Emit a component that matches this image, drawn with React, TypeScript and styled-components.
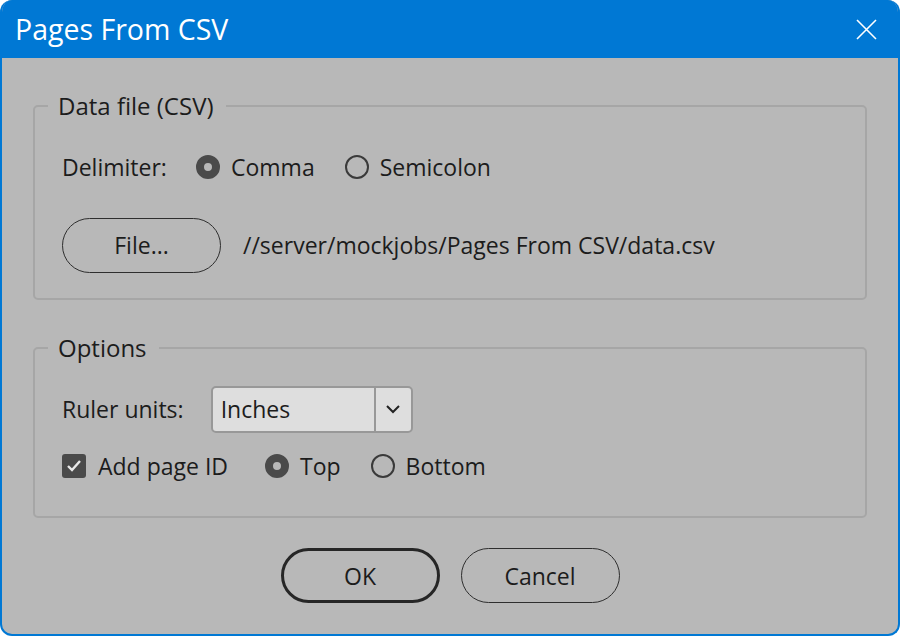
import React from 'react';
import styled, { createGlobalStyle } from 'styled-components';

const GlobalStyle = createGlobalStyle`
  html, body {
    margin: 0;
    padding: 0;
    background: #ffffff;
  }
  body {
    font-family: 'Open Sans', 'Noto Sans', sans-serif;
    color: #1c1c1c;
  }
`;

const Window = styled.div`
  width: 900px;
  height: 636px;
  box-sizing: border-box;
  border: 2px solid #0078d4;
  border-top: none;
  border-radius: 12px;
  overflow: hidden;
  background: #b8b8b8;
  display: flex;
  flex-direction: column;
`;

const TitleBar = styled.div`
  height: 58px;
  flex: none;
  background: #0078d4;
  color: #ffffff;
  display: flex;
  align-items: center;
  justify-content: space-between;
  padding: 0 23px 0 15px;
  font-size: 28.5px;
  margin: 0 -2px;
`;

const CloseButton = styled.svg`
  width: 21px;
  height: 21px;
`;

const Body = styled.div`
  flex: 1;
  padding: 33px 31px 0;
  display: flex;
  flex-direction: column;
`;

const Group = styled.fieldset<{ $gapTop?: number }>`
  margin: ${(p) => p.$gapTop ?? 0}px 0 0;
  padding: 0 0 0 27px;
  border: 2px solid #a6a6a6;
  border-radius: 5px;
  min-width: 0;
`;

const Legend = styled.legend`
  margin-left: -14px;
  padding: 0 12px 0 10px;
  font-size: 24px;
  line-height: 30px;
`;

const Row = styled.div<{ $height: number; $top?: number; $bottom?: number }>`
  display: flex;
  align-items: center;
  height: ${(p) => p.$height}px;
  margin: ${(p) => p.$top ?? 0}px 0 ${(p) => p.$bottom ?? 0}px;
  font-size: 23px;
`;

const Label = styled.span<{ $width?: number }>`
  width: ${(p) => (p.$width ? `${p.$width}px` : 'auto')};
  flex: none;
`;

const RadioItem = styled.label<{ $after?: number }>`
  display: flex;
  align-items: center;
  gap: 11px;
  margin-right: ${(p) => p.$after ?? 30}px;
`;

const RadioDot = styled.span<{ $on?: boolean }>`
  width: 24px;
  height: 24px;
  box-sizing: border-box;
  border-radius: 50%;
  border: ${(p) => (p.$on ? '8px solid #4a4a4a' : '2px solid #3a3a3a')};
  background: #b8b8b8;
`;

const PillButton = styled.button<{ $default?: boolean }>`
  width: 159px;
  height: 55px;
  box-sizing: border-box;
  border-radius: 28px;
  border: ${(p) => (p.$default ? '3px solid #262626' : '1.5px solid #2e2e2e')};
  background: transparent;
  font-family: inherit;
  font-size: 23px;
  color: #1c1c1c;
  padding: 0;
`;

const PathText = styled.span`
  margin-left: 22px;
`;

const Select = styled.div`
  margin-left: 27px;
  width: 202px;
  height: 47px;
  box-sizing: border-box;
  border: 2px solid #989898;
  border-radius: 5px;
  background: #dedede;
  display: flex;
`;

const SelectValue = styled.span`
  flex: 1;
  display: flex;
  align-items: center;
  padding-left: 8px;
`;

const SelectArrow = styled.span`
  width: 35px;
  border-left: 2px solid #989898;
  display: flex;
  align-items: center;
  justify-content: center;
`;

const Checkbox = styled.span`
  width: 24px;
  height: 24px;
  border-radius: 3px;
  background: #4a4a4a;
  display: flex;
  align-items: center;
  justify-content: center;
  margin-right: 12px;
`;

const CheckItem = styled.label`
  display: flex;
  align-items: center;
  margin-right: 37px;
`;

const Footer = styled.div`
  display: flex;
  justify-content: center;
  gap: 21px;
  margin-top: 30px;
`;

export default function App() {
  return (
    <>
      <GlobalStyle />
      <Window>
        <TitleBar>
          <span>Pages From CSV</span>
          <CloseButton viewBox="0 0 21 21">
            <path d="M1 1 L20 20 M20 1 L1 20" stroke="#ffffff" strokeWidth="1.6" fill="none" />
          </CloseButton>
        </TitleBar>
        <Body>
          <Group>
            <Legend>Data file (CSV)</Legend>
            <Row $height={62} $top={15}>
              <Label $width={134}>Delimiter:</Label>
              <RadioItem>
                <RadioDot $on />
                Comma
              </RadioItem>
              <RadioItem>
                <RadioDot />
                Semicolon
              </RadioItem>
            </Row>
            <Row $height={70} $top={12} $bottom={18}>
              <PillButton>File...</PillButton>
              <PathText>//server/mockjobs/Pages From CSV/data.csv</PathText>
            </Row>
          </Group>
          <Group $gapTop={33}>
            <Legend>Options</Legend>
            <Row $height={56} $top={18}>
              <Label>Ruler units:</Label>
              <Select>
                <SelectValue>Inches</SelectValue>
                <SelectArrow>
                  <svg width="14" height="9" viewBox="0 0 14 9">
                    <polyline points="1,1 7,7 13,1" stroke="#222" strokeWidth="2" fill="none" />
                  </svg>
                </SelectArrow>
              </Select>
            </Row>
            <Row $height={58} $bottom={21}>
              <CheckItem>
                <Checkbox>
                  <svg width="16" height="14" viewBox="0 0 16 14">
                    <polyline points="2,7 6,11 14,2" stroke="#e8e8e8" strokeWidth="2.4" fill="none" />
                  </svg>
                </Checkbox>
                Add page ID
              </CheckItem>
              <RadioItem $after={30}>
                <RadioDot $on />
                Top
              </RadioItem>
              <RadioItem>
                <RadioDot />
                Bottom
              </RadioItem>
            </Row>
          </Group>
          <Footer>
            <PillButton $default>OK</PillButton>
            <PillButton>Cancel</PillButton>
          </Footer>
        </Body>
      </Window>
    </>
  );
}
